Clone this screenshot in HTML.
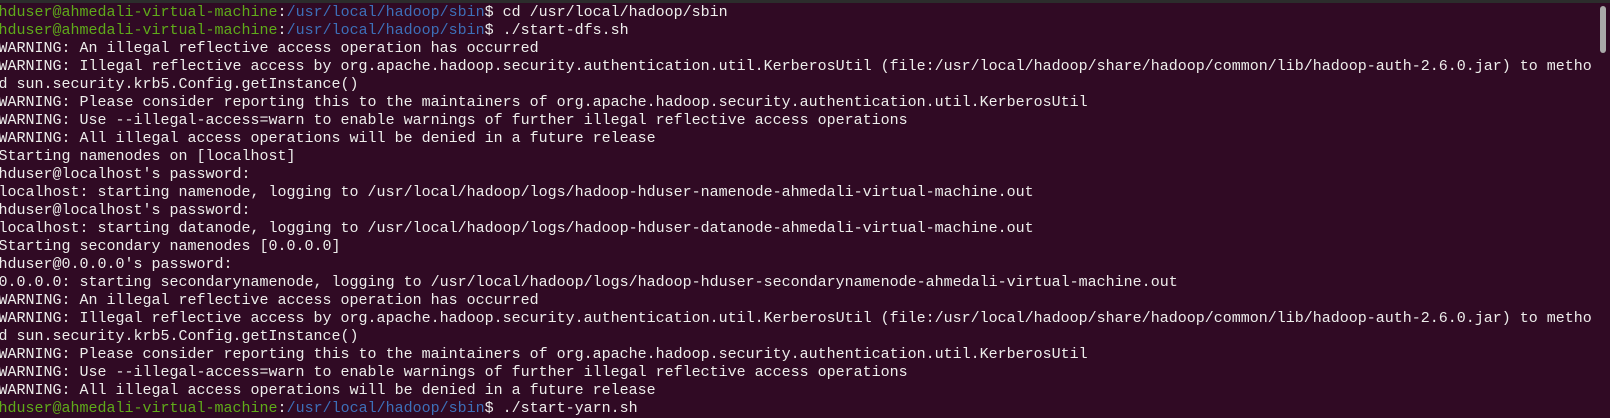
<!DOCTYPE html>
<html><head><meta charset="utf-8"><style>
html,body{margin:0;padding:0;width:1610px;height:406px;overflow:hidden;background:#300a24;}
.top{position:absolute;left:0;top:0;width:1610px;height:3px;background:#2c2c2c;}
.sb{position:absolute;left:1600px;top:6px;width:6px;height:47px;border-radius:3px;background:#a9a9a9;}
.t{position:absolute;left:-1.5px;top:4.3px;margin:0;font-family:"Liberation Mono",monospace;font-size:15px;color:#eeeeec;}
.t div{height:18px;line-height:18px;white-space:pre;}
.g{color:#5faa1a;}.b{color:#3d6fb8;}
</style></head><body>
<div class="top"></div><div class="sb"></div>
<div class="t">
<div><span class="g">hduser@ahmedali-virtual-machine</span>:<span class="b">/usr/local/hadoop/sbin</span>$ cd /usr/local/hadoop/sbin</div>
<div><span class="g">hduser@ahmedali-virtual-machine</span>:<span class="b">/usr/local/hadoop/sbin</span>$ ./start-dfs.sh</div>
<div>WARNING: An illegal reflective access operation has occurred</div>
<div>WARNING: Illegal reflective access by org.apache.hadoop.security.authentication.util.KerberosUtil (file:/usr/local/hadoop/share/hadoop/common/lib/hadoop-auth-2.6.0.jar) to metho</div>
<div>d sun.security.krb5.Config.getInstance()</div>
<div>WARNING: Please consider reporting this to the maintainers of org.apache.hadoop.security.authentication.util.KerberosUtil</div>
<div>WARNING: Use --illegal-access=warn to enable warnings of further illegal reflective access operations</div>
<div>WARNING: All illegal access operations will be denied in a future release</div>
<div>Starting namenodes on [localhost]</div>
<div>hduser@localhost's password: </div>
<div>localhost: starting namenode, logging to /usr/local/hadoop/logs/hadoop-hduser-namenode-ahmedali-virtual-machine.out</div>
<div>hduser@localhost's password: </div>
<div>localhost: starting datanode, logging to /usr/local/hadoop/logs/hadoop-hduser-datanode-ahmedali-virtual-machine.out</div>
<div>Starting secondary namenodes [0.0.0.0]</div>
<div>hduser@0.0.0.0's password: </div>
<div>0.0.0.0: starting secondarynamenode, logging to /usr/local/hadoop/logs/hadoop-hduser-secondarynamenode-ahmedali-virtual-machine.out</div>
<div>WARNING: An illegal reflective access operation has occurred</div>
<div>WARNING: Illegal reflective access by org.apache.hadoop.security.authentication.util.KerberosUtil (file:/usr/local/hadoop/share/hadoop/common/lib/hadoop-auth-2.6.0.jar) to metho</div>
<div>d sun.security.krb5.Config.getInstance()</div>
<div>WARNING: Please consider reporting this to the maintainers of org.apache.hadoop.security.authentication.util.KerberosUtil</div>
<div>WARNING: Use --illegal-access=warn to enable warnings of further illegal reflective access operations</div>
<div>WARNING: All illegal access operations will be denied in a future release</div>
<div><span class="g">hduser@ahmedali-virtual-machine</span>:<span class="b">/usr/local/hadoop/sbin</span>$ ./start-yarn.sh</div>
</div>
</body></html>
